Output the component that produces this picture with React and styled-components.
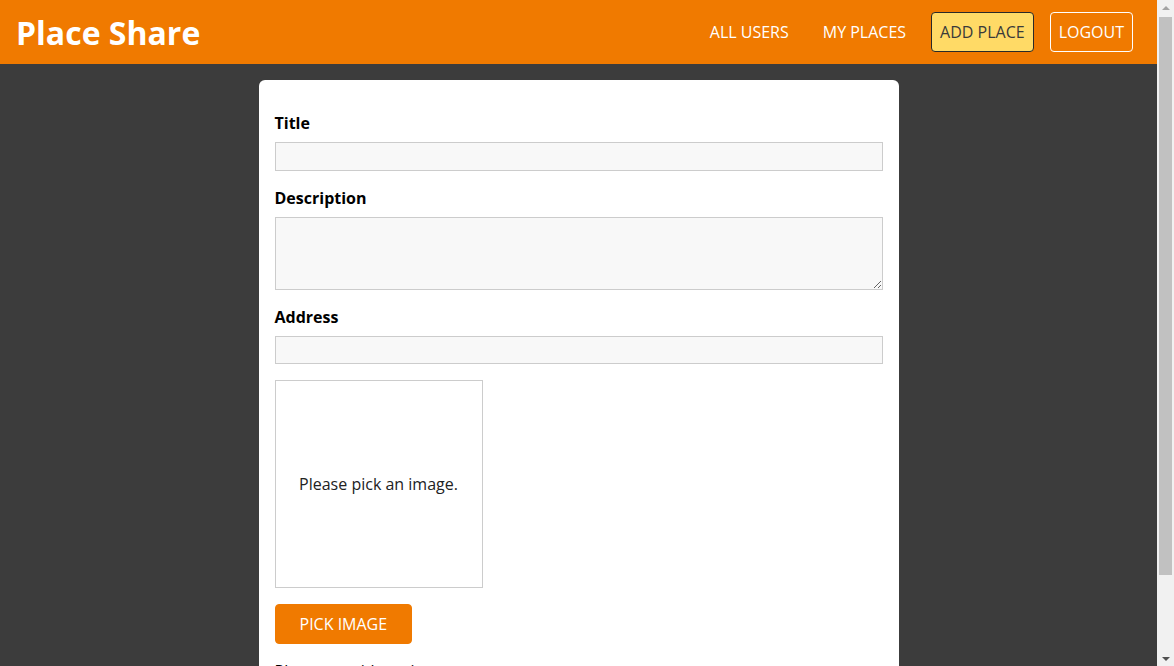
import React from "react"
import styled, { createGlobalStyle } from "styled-components"

const GlobalStyle = createGlobalStyle`
* {
  box-sizing: border-box;
}
html {
  font-family: "Open Sans", sans-serif;
}
body {
  margin: 0;
  background: #3c3c3c;
  overflow: hidden;
}
`

const Page = styled.div`
height: 100vh;
display: flex;
background: #3c3c3c;
`

const Content = styled.div`
flex: 1;
min-width: 0;
overflow: hidden;
`

const ScrollBar = styled.div`
width: 17px;
flex-shrink: 0;
display: flex;
flex-direction: column;
background: #f1f1f1;
`

const ArrowButton = styled.div`
height: 17px;
display: flex;
align-items: center;
justify-content: center;
&::after {
  content: "";
  width: 0;
  height: 0;
  border-left: 4px solid transparent;
  border-right: 4px solid transparent;
  ${p => (p.$down
    ? "border-top: 4px solid #505050; margin-top: 2px;"
    : "border-bottom: 4px solid #a3a3a3; margin-top: -1px;")}
}
`

const Track = styled.div`
flex: 1;
`

const Thumb = styled.div`
height: 88.3%;
margin: 0 2px;
background: #c1c1c1;
`

const Header = styled.header`
width: 100%;
height: 4rem;
display: flex;
align-items: center;
justify-content: space-between;
background: #f07a00;
padding: 0 1rem;
`

const Logo = styled.h1`
margin: 0;
color: white;
font-size: 2rem;
font-weight: 700;
`

const NavLinks = styled.ul`
list-style: none;
margin: 0;
padding: 0;
display: flex;
align-items: center;
`

const NavItem = styled.li`
margin: 0 0.5rem;
`

const NavLink = styled.a`
display: block;
border: 1px solid ${p => (p.$active ? "#292929" : "transparent")};
border-radius: ${p => (p.$active ? "4px" : "0")};
background: ${p => (p.$active ? "#ffda66" : "transparent")};
color: ${p => (p.$active ? "#3a3a3a" : "white")};
text-decoration: none;
padding: 0.5rem;
font-size: 1rem;
`

const LogoutButton = styled.button`
cursor: pointer;
border: 1px solid white;
border-radius: 4px;
color: white;
background: transparent;
padding: 0.5rem;
font: inherit;
`

const Main = styled.main`
padding: 1rem 0 0;
`

const PlaceForm = styled.form`
margin: 0 auto;
padding: 1rem;
width: 90%;
max-width: 40rem;
border-radius: 6px;
background: white;
`

const FormControl = styled.div`
margin: 1rem 0;
`

const Label = styled.label`
display: block;
font-weight: 700;
margin-bottom: 0.5rem;
color: #000;
`

const Input = styled.input`
display: block;
width: 100%;
font: inherit;
border: 1px solid #ccc;
background: #f8f8f8;
padding: 0.15rem 0.25rem;
outline: none;
`

const TextArea = styled.textarea`
display: block;
width: 100%;
font: inherit;
border: 1px solid #ccc;
background: #f8f8f8;
padding: 0.15rem 0.25rem;
outline: none;
`

const Preview = styled.div`
width: 13rem;
height: 13rem;
border: 1px solid #ccc;
display: flex;
justify-content: center;
align-items: center;
text-align: center;
margin-bottom: 1rem;
color: #222;
`

const Button = styled.button`
font: inherit;
padding: 0.5rem 1.5rem;
border: 1px solid ${p => (p.disabled ? "#ccc" : "#f07a00")};
border-radius: 4px;
background: ${p => (p.disabled ? "#ccc" : "#f07a00")};
color: ${p => (p.disabled ? "#979797" : "white")};
cursor: pointer;
margin-right: 1rem;
`

const ErrorText = styled.p`
margin: 1rem 0;
color: #000;
`

const App = () => (
    <Page>
        <GlobalStyle />
        <Content>
            <Header>
                <Logo>Place Share</Logo>
                <nav>
                    <NavLinks>
                        <NavItem><NavLink href="#">ALL USERS</NavLink></NavItem>
                        <NavItem><NavLink href="#">MY PLACES</NavLink></NavItem>
                        <NavItem><NavLink href="#" $active>ADD PLACE</NavLink></NavItem>
                        <NavItem><LogoutButton>LOGOUT</LogoutButton></NavItem>
                    </NavLinks>
                </nav>
            </Header>
            <Main>
                <PlaceForm onSubmit={e => e.preventDefault()}>
                    <FormControl>
                        <Label htmlFor="title">Title</Label>
                        <Input id="title" type="text" />
                    </FormControl>
                    <FormControl>
                        <Label htmlFor="description">Description</Label>
                        <TextArea id="description" rows={3} />
                    </FormControl>
                    <FormControl>
                        <Label htmlFor="address">Address</Label>
                        <Input id="address" type="text" />
                    </FormControl>
                    <FormControl>
                        <Preview><p>Please pick an image.</p></Preview>
                        <Button type="button">PICK IMAGE</Button>
                        <ErrorText>Please provide an image.</ErrorText>
                    </FormControl>
                    <Button type="submit" disabled>ADD PLACE</Button>
                </PlaceForm>
            </Main>
        </Content>
        <ScrollBar>
            <ArrowButton />
            <Track><Thumb /></Track>
            <ArrowButton $down />
        </ScrollBar>
    </Page>
)

export default App
